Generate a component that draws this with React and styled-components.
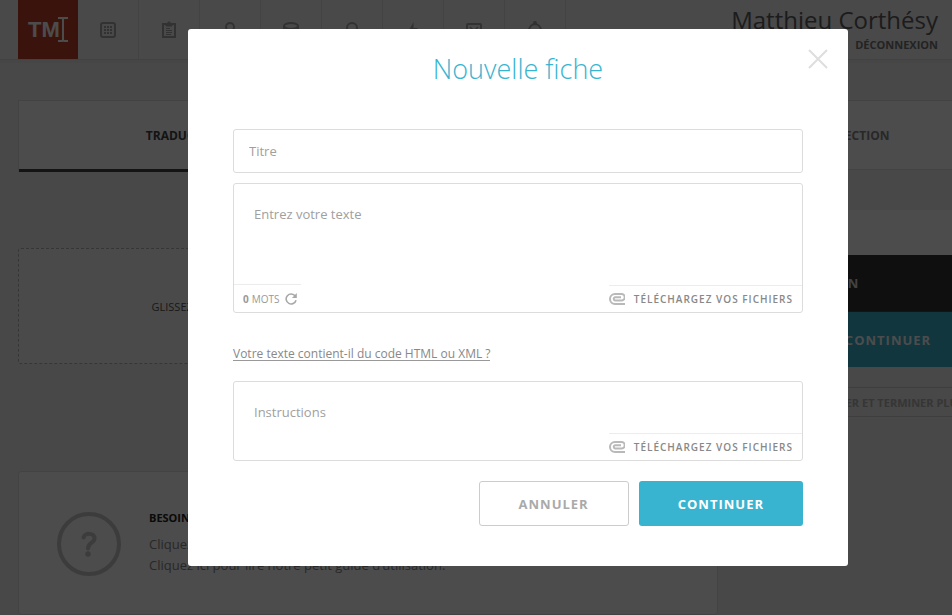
import { useState } from 'react';
import styled, { createGlobalStyle, css } from 'styled-components';

const NAV = ['grid', 'clipboard', 'user', 'coins', 'search', 'bolt', 'mail', 'home'];

const TABS = ['Traduction', 'Rédaction', 'Correction'];

const paths = {
	grid: (
		<>
			<rect x="1" y="2" width="14" height="14" rx="2" />
			<path
				strokeWidth="2"
				strokeDasharray="2 1"
				d="M4 6h8M4 9h8M4 12h8"
			/>
		</>
	),
	clipboard: (
		<>
			<path d="M5 3H2v13h12V3h-3" />
			<path d="M5 2.500h1.500c0-2 3-2 3 0H11V5H5z" fill="currentColor" strokeWidth="1" />
			<path strokeWidth="1" d="M5 7.500h4M5 9.500h6M5 11.500h6M5 13.500h5" />
		</>
	),
	user: (
		<>
			<circle cx="8" cy="6" r="4" />
			<path d="M2 17c0-3 2-5 4-6M14 17c0-3-2-5-4-6" />
		</>
	),
	coins: (
		<>
			<ellipse cx="8" cy="5" rx="7" ry="3" />
			<path d="M1 5v8c0 4 14 4 14 0V5M1 9c0 4 14 4 14 0" />
		</>
	),
	search: (
		<>
			<circle cx="8" cy="7" r="5" />
			<path d="M11 11l4 5" />
		</>
	),
	bolt: <path d="M8.500 1L3 11h4l-1 6 7-10H8.500z" fill="currentColor" stroke="none" />,
	mail: (
		<>
			<rect x="1" y="3" width="14" height="12" rx="1" />
			<path d="M4 6l4 4 4-4" strokeWidth="1.500" />
		</>
	),
	home: (
		<>
			<circle cx="8" cy="2" r="1" />
			<path d="M2 10c0-9 12-9 12 0v5H2z" />
		</>
	),
};

const NavIcon = ({ name }) => (
	<svg
		width="16"
		height="18"
		viewBox="0 0 16 18"
		fill="none"
		stroke="currentColor"
		strokeWidth="2"
		aria-hidden="true">
		{paths[name]}
	</svg>
);

const ClipIcon = () => (
	<svg
		width="16"
		height="12"
		viewBox="0 0 16 12"
		fill="none"
		stroke="#b9b9b9"
		strokeWidth="2"
		aria-hidden="true">
		<path d="M16 11H6A5 5 0 0 1 6 1h6.500a2.900 2.900 0 0 1 0 6.500H6a1.700 1.700 0 0 1 0-3.300h6" />
	</svg>
);

const RefreshIcon = () => (
	<svg width="12" height="12" viewBox="0 0 12 12" fill="none" aria-hidden="true">
		<path d="M10.200 3A5 5 0 1 0 11 7.200" stroke="#a8a8a8" strokeWidth="1.600" />
		<path d="M11.800 0v5H7z" fill="#a8a8a8" />
	</svg>
);

const CursorIcon = () => (
	<svg width="10" height="25" viewBox="0 0 10 25" fill="none" aria-hidden="true">
		<path
			d="M0 1h4l1 1 1-1h4M0 24h4l1-1 1 1h4M5 2v21"
			stroke="#fff"
			strokeWidth="2"
		/>
	</svg>
);

const HelpIcon = () => (
	<svg width="64" height="64" viewBox="0 0 64 64" fill="none" aria-hidden="true">
		<circle cx="32" cy="32" r="30" stroke="#c8c8c8" strokeWidth="4" />
		<path
			d="M26.500 25.500c1-5 11.500-5 11 1 0 4.500-6.500 4-6.500 10"
			stroke="#c8c8c8"
			strokeWidth="4"
			strokeLinecap="round"
		/>
		<circle cx="31" cy="42" r="2.700" fill="#c8c8c8" />
	</svg>
);

const CloseIcon = () => (
	<svg width="20" height="20" viewBox="0 0 20 20" aria-hidden="true">
		<path d="M1 1l18 18M19 1L1 19" stroke="#dedede" strokeWidth="2" />
	</svg>
);

const Upload = () => (
	<UploadButton type="button">
		<ClipIcon />
		Téléchargez vos fichiers
	</UploadButton>
);

const App = () => {
	const [title, setTitle] = useState('');
	const [text, setText] = useState('');
	const [instructions, setInstructions] = useState('');
	const [words, setWords] = useState(0);

	const countWords = () => {
		setWords(text.split(/\s+/).filter(Boolean).length);
	};

	return (
		<Page>
			<GlobalStyle />
			<Header>
				<Logo href="#">
					TM
					<CursorIcon />
				</Logo>
				<Nav>
					{NAV.map((name) => (
						<NavLink key={name} href={'#' + name} aria-label={name}>
							<NavIcon name={name} />
						</NavLink>
					))}
				</Nav>
				<Account>
					<Name>Matthieu Corthésy</Name>
					<Logout href="#logout">Déconnexion</Logout>
				</Account>
			</Header>

			<Container>
				<Tabs>
					{TABS.map((tab, i) => (
						<Tab key={tab} type="button" $active={i === 0}>
							{tab}
						</Tab>
					))}
				</Tabs>
				<Columns>
					<Main>
						<DropZone>
							Glissez-déposez tous vos fichiers ici, ou cliquez ici pour les
							sélectionner
						</DropZone>
						<Help>
							<HelpIcon />
							<div>
								<HelpTitle>Besoin d’aide ?</HelpTitle>
								<HelpText>Cliquez ici pour voir la vidéo de présentation.</HelpText>
								<HelpText>
									Cliquez ici pour lire notre petit guide d’utilisation.
								</HelpText>
							</div>
						</Help>
					</Main>
					<Side>
						<SideHead />
						<SideTitle>Estimation</SideTitle>
						<SideButton type="button">Continuer</SideButton>
						<LaterButton type="button">
							Enregistrer et terminer plus tard
						</LaterButton>
					</Side>
				</Columns>
			</Container>

			<Overlay>
				<Modal role="dialog" aria-labelledby="modal-title">
					<Close type="button" aria-label="Fermer">
						<CloseIcon />
					</Close>
					<ModalTitle id="modal-title">Nouvelle fiche</ModalTitle>
					<TitleInput
						aria-label="Titre"
						placeholder="Titre"
						value={title}
						onChange={(e) => setTitle(e.target.value)}
					/>
					<Field>
						<TextArea
							$height={100}
							aria-label="Entrez votre texte"
							placeholder="Entrez votre texte"
							value={text}
							onChange={(e) => setText(e.target.value)}
						/>
						<FieldFooter>
							<Count type="button" onClick={countWords}>
								<b>{words}</b>
								<span>Mots</span>
								<RefreshIcon />
							</Count>
							<Upload />
						</FieldFooter>
					</Field>
					<CodeLink href="#code">
						Votre texte contient-il du code HTML ou XML ?
					</CodeLink>
					<Field>
						<TextArea
							$height={50}
							aria-label="Instructions"
							placeholder="Instructions"
							value={instructions}
							onChange={(e) => setInstructions(e.target.value)}
						/>
						<FieldFooter $end>
							<Upload />
						</FieldFooter>
					</Field>
					<Actions>
						<Cancel type="button">Annuler</Cancel>
						<Submit type="button">Continuer</Submit>
					</Actions>
				</Modal>
			</Overlay>
		</Page>
	);
};

const GlobalStyle = createGlobalStyle`
	* {
		box-sizing: border-box;
	}
	body {
		margin: 0;
		font-family: 'Open Sans', 'Noto Sans', sans-serif;
		color: #222;
	}
	button {
		padding: 0;
		border: none;
		background: none;
		font-family: inherit;
		text-transform: uppercase;
		cursor: pointer;
	}
	a {
		color: inherit;
		text-decoration: none;
	}
`;

/* the page behind does not scroll while the modal is open */
const Page = styled.div`
	position: relative;
	height: 100vh;
	overflow: hidden;
	background-color: #f0f0f0;
`;

const Header = styled.header`
	display: flex;
	height: 60px;
	padding: 0 14px 0 18px;
	border-bottom: 1px solid #dcdcdc;
	box-shadow: 0 3px 0 #eaeaea;
	background-color: #f3f3f3;
`;
const Logo = styled.a`
	display: flex;
	align-items: center;
	justify-content: center;
	width: 60px;
	height: 59px;
	background-color: #c4432b;
	color: #fff;
	font-family: 'Liberation Sans', sans-serif;
	font-size: 22px;
	font-weight: 700;
	svg {
		margin-left: -2px;
	}
`;
const Nav = styled.nav`
	display: flex;
`;
const NavLink = styled.a`
	display: flex;
	align-items: center;
	justify-content: center;
	width: 61px;
	border-right: 1px solid #e0e0e0;
	color: #a8a8a8;
`;
const Account = styled.div`
	margin-left: auto;
	text-align: right;
`;
const Name = styled.div`
	padding-top: 4px;
	color: #606060;
	font-size: 24px;
	line-height: 32px;
`;
const Logout = styled.a`
	display: block;
	color: #777;
	font-size: 11px;
	font-weight: 700;
	line-height: 18px;
	text-transform: uppercase;
`;

const Container = styled.div`
	min-width: 1036px;
	max-width: 1236px;
	margin: 0 auto;
	padding: 40px 18px 0;
`;
const Tabs = styled.div`
	display: grid;
	grid-template-columns: repeat(3, 1fr);
	align-items: start;
	border: 1px solid #e0e0e0;
	border-bottom: none;
`;
const Tab = styled.button`
	height: 69px;
	border-bottom: 1px solid #e0e0e0;
	background-color: #fdfdfd;
	color: #888;
	font-size: 12px;
	font-weight: 700;
	${(props) =>
		props.$active &&
		css`
			height: 71px;
			border-bottom: 3px solid #444;
			color: #444;
		`}
`;
const Columns = styled.div`
	display: grid;
	grid-template-columns: 1fr 260px;
	gap: 40px;
	margin-top: 38px;
`;
const Main = styled.main`
	display: flex;
	flex-direction: column;
	gap: 107px;
	padding-top: 38px;
`;
const DropZone = styled.div`
	display: flex;
	align-items: center;
	justify-content: center;
	height: 116px;
	border: 1px dashed #b4b4b4;
	border-radius: 3px;
	background-color: #f8f8f8;
	color: #555;
	font-size: 11px;
	text-transform: uppercase;
`;
const Help = styled.section`
	display: flex;
	gap: 28px;
	height: 144px;
	padding: 40px 38px;
	border: 1px solid #e0e0e0;
	border-radius: 3px;
	background-color: #fdfdfd;
`;
const HelpTitle = styled.h2`
	margin: 0 0 10px;
	font-size: 11px;
	line-height: 12px;
	text-transform: uppercase;
`;
const HelpText = styled.p`
	margin: 0;
	color: #888;
	font-size: 13px;
	line-height: 21px;
`;

const Side = styled.aside`
	display: flex;
	flex-direction: column;
`;
const SideHead = styled.div`
	height: 45px;
	background-color: #fdfdfd;
`;
const SideTitle = styled.div`
	padding: 0 20px;
	background-color: #333;
	border-bottom: 1px solid #444;
	color: #ddd;
	font-size: 13px;
	font-weight: 700;
	line-height: 56px;
	text-transform: uppercase;
`;
const SideButton = styled.button`
	height: 55px;
	margin-bottom: 20px;
	background-color: #39b4d0;
	color: #fff;
	font-size: 13px;
	font-weight: 700;
	letter-spacing: 1px;
`;
const LaterButton = styled.button`
	height: 30px;
	padding-left: 6px;
	border: 1px solid #d0d0d0;
	color: #b4b4b4;
	font-size: 11px;
	font-weight: 700;
`;

const Overlay = styled.div`
	position: absolute;
	inset: 0;
	min-width: 1036px;
	padding-top: 29px;
	background-color: rgba(0, 0, 0, 0.7);
`;
const Modal = styled.section`
	position: relative;
	width: 660px;
	margin: 0 auto;
	padding: 20px 45px 40px;
	border-radius: 3px;
	background-color: #fff;
`;
const Close = styled.button`
	position: absolute;
	top: 20px;
	right: 20px;
	height: 20px;
	line-height: 0;
`;
const ModalTitle = styled.h1`
	margin: 0 0 40px;
	color: #39b4d0;
	font-size: 27px;
	font-weight: 300;
	line-height: 40px;
	text-align: center;
`;
const placeholder = css`
	color: #666;
	font-family: inherit;
	font-size: 13px;
	outline: none;
	&::placeholder {
		color: #a0a0a0;
		opacity: 1;
	}
`;
const TitleInput = styled.input`
	${placeholder}
	display: block;
	width: 100%;
	height: 44px;
	margin-bottom: 10px;
	padding: 0 15px;
	border: 1px solid #dcdcdc;
	border-radius: 3px;
`;
const Field = styled.div`
	border: 1px solid #dcdcdc;
	border-radius: 3px;
`;
const TextArea = styled.textarea`
	${placeholder}
	display: block;
	width: 100%;
	height: ${(props) => props.$height}px;
	padding: 20px 20px 0;
	border: none;
	background: none;
	line-height: 20px;
	resize: none;
`;
const FieldFooter = styled.div`
	display: flex;
	align-items: flex-end;
	justify-content: ${(props) => (props.$end ? 'flex-end' : 'space-between')};
	height: 28px;
`;
const Count = styled.button`
	display: flex;
	align-items: center;
	gap: 3px;
	height: 28px;
	padding: 0 4px 0 9px;
	border-top: 1px solid #ececec;
	color: #999;
	font-size: 10px;
	svg {
		margin-left: 3px;
	}
`;
const UploadButton = styled.button`
	display: flex;
	align-items: center;
	gap: 9px;
	height: 27px;
	padding-right: 9px;
	border-top: 1px solid #ececec;
	color: #888;
	font-size: 10px;
	font-weight: 600;
	letter-spacing: 1px;
`;
const CodeLink = styled.a`
	display: block;
	width: fit-content;
	margin: 35px 0 20px;
	border-bottom: 1px solid #999;
	color: #888;
	font-size: 12px;
	line-height: 12px;
`;
const Actions = styled.div`
	display: flex;
	justify-content: flex-end;
	gap: 10px;
	margin-top: 20px;
`;
const Action = styled.button`
	height: 45px;
	padding: 0 39px;
	border-radius: 3px;
	font-size: 13px;
	font-weight: 700;
	letter-spacing: 1px;
`;
const Cancel = styled(Action)`
	border: 1px solid #ccc;
	color: #aaa;
`;
const Submit = styled(Action)`
	background-color: #39b4d0;
	color: #fff;
`;

export default App;
